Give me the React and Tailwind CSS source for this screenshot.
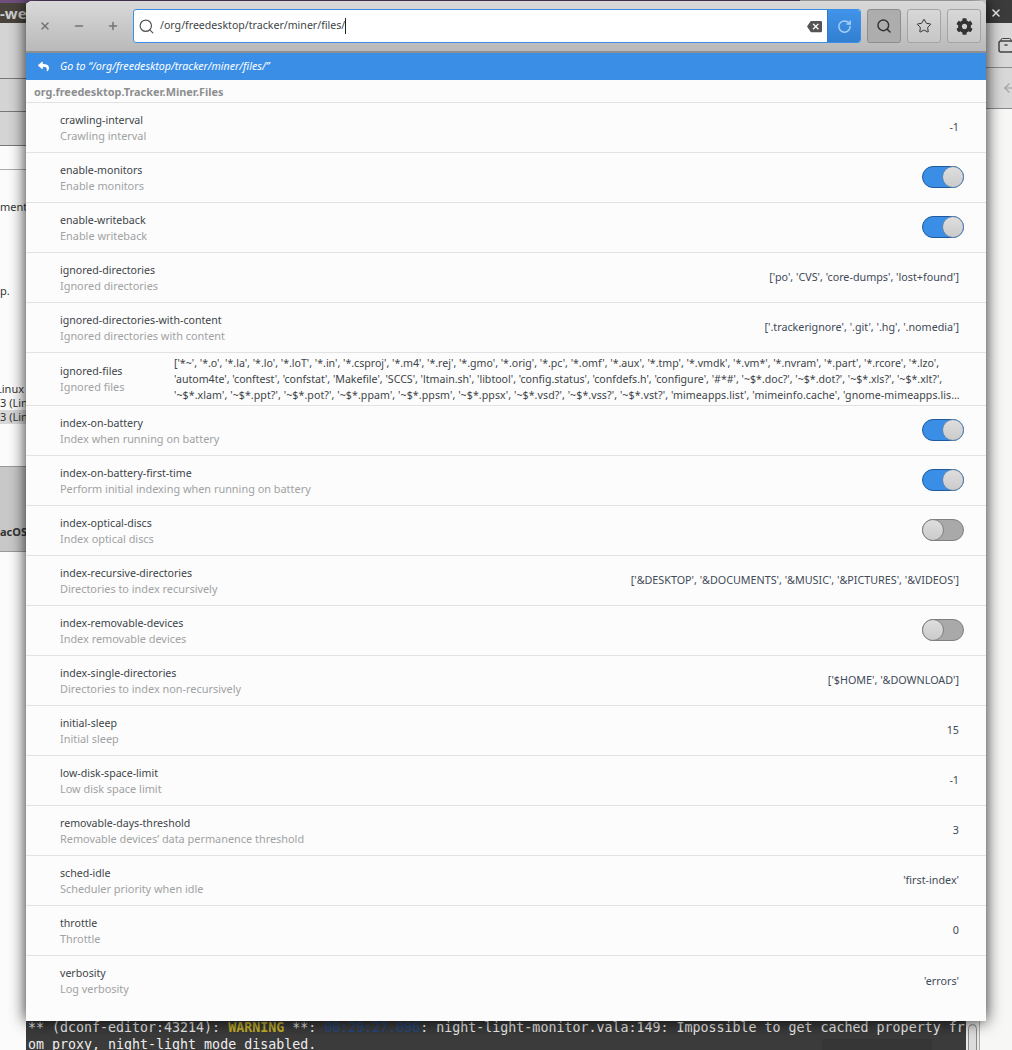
import { Search, Star, RotateCw, X, Minus, Plus, ArrowLeft } from 'lucide-react'
import { FaCog, FaReply } from 'react-icons/fa'
import { MdBackspace } from 'react-icons/md'

const rows = [
    { name: 'crawling-interval', desc: 'Crawling interval', value: '-1' },
    { name: 'enable-monitors', desc: 'Enable monitors', toggle: true },
    { name: 'enable-writeback', desc: 'Enable writeback', toggle: true },
    { name: 'ignored-directories', desc: 'Ignored directories', value: "['po', 'CVS', 'core-dumps', 'lost+found']" },
    { name: 'ignored-directories-with-content', desc: 'Ignored directories with content', value: "['.trackerignore', '.git', '.hg', '.nomedia']" },
    { name: 'ignored-files', desc: 'Ignored files', lines: true },
    { name: 'index-on-battery', desc: 'Index when running on battery', toggle: true },
    { name: 'index-on-battery-first-time', desc: 'Perform initial indexing when running on battery', toggle: true },
    { name: 'index-optical-discs', desc: 'Index optical discs', toggle: false },
    { name: 'index-recursive-directories', desc: 'Directories to index recursively', value: "['&DESKTOP', '&DOCUMENTS', '&MUSIC', '&PICTURES', '&VIDEOS']" },
    { name: 'index-removable-devices', desc: 'Index removable devices', toggle: false },
    { name: 'index-single-directories', desc: 'Directories to index non-recursively', value: "['$HOME', '&DOWNLOAD']" },
    { name: 'initial-sleep', desc: 'Initial sleep', value: '15' },
    { name: 'low-disk-space-limit', desc: 'Low disk space limit', value: '-1' },
    { name: 'removable-days-threshold', desc: 'Removable devices’ data permanence threshold', value: '3' },
    { name: 'sched-idle', desc: 'Scheduler priority when idle', value: "'first-index'" },
    { name: 'throttle', desc: 'Throttle', value: '0' },
    { name: 'verbosity', desc: 'Log verbosity', value: "'errors'" },
]

const Toggle = ({ on }) => (
    <div className={`relative w-[42px] h-[22px] rounded-full border ${on ? 'bg-[#3a8ee6] border-[#1d5a9e]' : 'bg-[#a9a9a9] border-[#808080]'}`}>
        <div className={`absolute top-[-1px] w-[22px] h-[22px] rounded-full border bg-gradient-to-b from-[#dedede] to-[#cbcbcb] ${on ? 'right-[-1px] border-[#5f86ad]' : 'left-[-1px] border-[#808080]'}`} />
    </div>
)

const Row = ({ row }) => {
    const last = row.name === 'verbosity'
    return (
        <div className={`flex items-center pl-[34px] pr-[27px] border-b border-[#e2e2e2] ${row.lines ? 'h-[53px]' : 'h-[50px]'} ${last ? 'border-b-0' : ''}`}>
            <div className="shrink-0 leading-[16px]">
                <div className="text-[10.6px] text-[#3d4448]">{row.name}</div>
                <div className="text-[10.9px] text-[#a0a2a3]">{row.desc}</div>
            </div>
            {row.lines && (
                <div className="ml-auto text-[10.6px] text-[#3d4448] leading-[16px] whitespace-nowrap mr-[-1px] w-[786px]">
                    <div>{"['*~', '*.o', '*.la', '*.lo', '*.loT', '*.in', '*.csproj', '*.m4', '*.rej', '*.gmo', '*.orig', '*.pc', '*.omf', '*.aux', '*.tmp', '*.vmdk', '*.vm*', '*.nvram', '*.part', '*.rcore', '*.lzo',"}</div>
                    <div>{"'autom4te', 'conftest', 'confstat', 'Makefile', 'SCCS', 'ltmain.sh', 'libtool', 'config.status', 'confdefs.h', 'configure', '#*#', '~$*.doc?', '~$*.dot?', '~$*.xls?', '~$*.xlt?',"}</div>
                    <div className="tracking-[0.08px]">{"'~$*.xlam', '~$*.ppt?', '~$*.pot?', '~$*.ppam', '~$*.ppsm', '~$*.ppsx', '~$*.vsd?', '~$*.vss?', '~$*.vst?', 'mimeapps.list', 'mimeinfo.cache', 'gnome-mimeapps.lis…"}</div>
                </div>
            )}
            {row.value && <div className="ml-auto text-[10.75px] whitespace-nowrap text-[#3f4a57]">{row.value}</div>}
            {row.toggle !== undefined && <div className="ml-auto mr-[-5px] mb-[2px]"><Toggle on={row.toggle} /></div>}
        </div>
    )
}

const ToolButton = ({ active, children }) => (
    <div className={`w-[34px] h-[34px] rounded-[3px] border flex items-center justify-center ${active ? 'bg-[#adadad] border-[#8d8d8d]' : 'bg-gradient-to-b from-[#d8d8d8] to-[#c6c6c6] border-[#a5a5a5]'}`}>
        {children}
    </div>
)

const Window = () => (
    <div className="absolute left-[26px] top-[1px] w-[960px] h-[1020px] rounded-t-[6px] bg-[#fcfcfc] shadow-[0_0_16px_rgba(0,0,0,0.85)] flex flex-col overflow-hidden">
        {/* header bar */}
        <div className="h-[52px] shrink-0 flex items-center bg-gradient-to-b from-[#d9d9d9] to-[#b9b9b9] border-b-2 border-[#8f8f8f]">
            <div className="w-[107px] shrink-0 flex items-center text-[#737373]">
                <X size={12} strokeWidth={3} className="ml-[13px]" />
                <Minus size={12} strokeWidth={3} className="ml-[22px]" />
                <Plus size={12} strokeWidth={3} className="ml-[22px]" />
            </div>
            <div className="w-[728px] h-[34px] shrink-0 rounded-[3px] border border-[#3a8ee6] bg-white flex items-center overflow-hidden">
                <Search size={17} strokeWidth={1.7} className="ml-[4px] text-[#555]" />
                <span className="ml-[5px] text-[10.6px] text-[#3d4448]">/org/freedesktop/tracker/miner/files/</span>
                <span className="w-px h-[16px] bg-[#222]" />
                <MdBackspace size={15} className="ml-auto mr-[5px] text-[#555]" />
                <div className="w-[33px] h-full bg-gradient-to-b from-[#4194ea] to-[#327fd0] flex items-center justify-center border-l border-[#2f78c4]">
                    <RotateCw size={15} strokeWidth={2.4} className="text-[#a6cff5]" />
                </div>
            </div>
            <div className="flex gap-[6px] ml-[6px]">
                <ToolButton active><Search size={16} strokeWidth={2.2} className="text-[#333]" /></ToolButton>
                <ToolButton><Star size={16} strokeWidth={1.5} className="text-[#333]" /></ToolButton>
                <ToolButton><FaCog size={17} className="text-[#333]" /></ToolButton>
            </div>
        </div>
        {/* suggestion bar */}
        <div className="h-[27px] shrink-0 bg-[#3a8ee6] text-white flex items-center italic text-[10.65px]">
            <FaReply size={11} className="ml-[12px]" />
            <span className="ml-[11px]">Go to “/org/freedesktop/tracker/miner/files/”</span>
        </div>
        <div className="h-[23px] shrink-0 pl-[8px] pt-[2px] flex items-center text-[10.9px] font-bold text-[#8c8e8f] border-b border-[#e2e2e2]">
            org.freedesktop.Tracker.Miner.Files
        </div>
        <div>
            {rows.map((row) => <Row key={row.name} row={row} />)}
        </div>
    </div>
)

export default function App() {
    return (
        <div className="relative w-[1012px] h-[1050px] overflow-hidden bg-[#f7f7f5] text-[11px] font-['Noto_Sans',sans-serif]">
            {/* windows behind */}
            <div className="absolute left-0 top-0 w-[800px] h-[3px] bg-[#6f4e7c]" />
            <div className="absolute left-0 top-[3px] w-[26px] h-[1047px] bg-[#fbfbfb] text-[#333] overflow-hidden">
                <div className="h-[20px] bg-[#4a433c] text-[#cfcfcf] font-bold text-[15px] flex items-center whitespace-nowrap">-we</div>
                <div className="h-[56px] bg-[#d4d4d4] border-b border-[#777]" />
                <div className="h-[33px] bg-[#d4d4d4] border-b border-[#777]" />
                <div className="h-[34px] bg-[#d4d4d4] border-b border-[#777]" />
                <div className="h-[24px] border-b border-[#aaa]" />
                <div className="flex flex-col whitespace-nowrap leading-[14px]">
                    <span className="mt-[30px]">ment</span>
                    <span className="mt-[70px]">p.</span>
                    <span className="mt-[84px] ml-[-4px]">Linux</span>
                    <span>3 (Lin</span>
                    <span className="bg-[#d8d8d8] w-full">3 (Lin</span>
                </div>
                <div className="mt-[42px] h-[86px] bg-[#c8c8c8] border-y border-[#999] flex items-end">
                    <span className="font-bold pb-[11px] whitespace-nowrap">acOS</span>
                </div>
            </div>
            <div className="absolute left-[986px] top-0 w-[26px] h-[1050px] bg-[#f7f7f5]">
                <div className="h-[23px] bg-[#3b3b3b]" />
                <div className="h-[45px] bg-[#d8d8d8] border-b border-[#8a8a8a] flex items-center pl-[12px]">
                    <svg width="16" height="16" viewBox="0 0 16 16" fill="none" stroke="#444" strokeWidth="1.5" className="shrink-0">
                        <path d="M3 4 V3 Q3 1.5 4.5 1.5 H11.5 Q13 1.5 13 3 V4" strokeWidth="1" />
                        <rect x="1" y="4" width="14" height="11" rx="2" />
                        <path d="M6.5 8 H9.5" />
                    </svg>
                </div>
                <div className="h-[41px] bg-[#d8d8d8] border-b border-[#8a8a8a] flex items-center pl-[16px] text-[#a0a0a0]">
                    <ArrowLeft size={14} className="shrink-0" />
                </div>
            </div>
            {/* terminal */}
            <div className="absolute left-[26px] top-[1019px] w-[940px] h-[31px] bg-[#3b3b3b] text-[#eee] font-['DejaVu_Sans_Mono',monospace] text-[13.3px] leading-[17px] pl-[2px] whitespace-nowrap overflow-hidden">
                <div>** (dconf-editor:43214): <span className="text-[#c4b02a] font-bold">WARNING</span> **: <span className="text-[#204a87]">00:29:27.096</span>: night-light-monitor.vala:149: Impossible to get cached property fr</div>
                <div>om proxy, night-light mode disabled.</div>
                <div className="absolute left-[796px] top-[20px] w-[110px] h-[11px] bg-[#363636]" />
            </div>
            <div className="absolute left-[966px] top-[1021px] w-[14px] h-[29px] bg-[#e8e8e8] border-r border-[#aaa]">
                <div className="mx-[2px] mt-[3px] h-[30px] rounded-t-full border border-[#888] bg-[#dcdcdc]" />
            </div>
            <Window />
            {/* close icon of the window behind, sits in the shade of the front window */}
            <X size={12} strokeWidth={3} className="absolute left-[990px] top-[7px] text-[#dddddd]" />
        </div>
    )
}
